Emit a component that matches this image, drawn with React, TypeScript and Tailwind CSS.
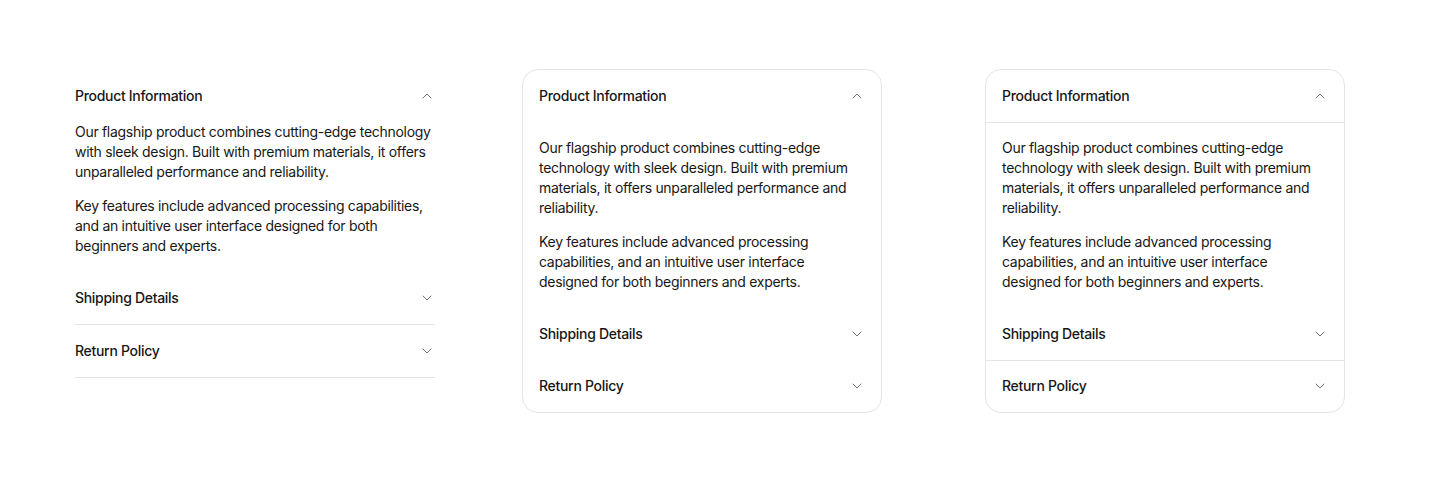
import { ChevronDown, ChevronUp } from "lucide-react";

type Variant = "plain" | "card" | "divided";

const items = ["Shipping Details", "Return Policy"];

function Row({ title, open, border }: { title: string; open?: boolean; border?: boolean }) {
  return (
    <div className={border ? "border-b border-[#e5e5e5]" : ""}>
      <button className="flex w-full items-center justify-between py-4 text-left text-sm font-medium text-[#171717]">
        <span>{title}</span>
        {open ? (
          <ChevronUp size={16} strokeWidth={1.5} className="text-[#737373]" />
        ) : (
          <ChevronDown size={16} strokeWidth={1.5} className="text-[#737373]" />
        )}
      </button>
    </div>
  );
}

function Accordion({ variant }: { variant: Variant }) {
  const card = variant !== "plain";
  return (
    <div
      className={
        card
          ? "-mt-px w-[360px] rounded-2xl border border-[#e5e5e5] bg-white px-4"
          : "w-[360px]"
      }
    >
      <div className={variant === "divided" ? "-mx-4 -mb-px border-b border-[#e5e5e5] px-4" : ""}>
        <Row title="Product Information" open />
      </div>
      <div className={"flex flex-col gap-3.5 pb-4 text-sm text-[#171717] " + (card ? "pt-4" : "")}>
        <p>
          Our flagship product combines cutting-edge technology with sleek design. Built with premium
          materials, it offers unparalleled performance and reliability.
        </p>
        <p>
          Key features include advanced processing capabilities, and an intuitive user interface
          designed for both beginners and experts.
        </p>
      </div>
      {items.map((t, i) => {
        if (variant === "plain") return <Row key={t} title={t} border />;
        if (variant === "divided")
          return (
            <div key={t} className={i === 0 ? "-mx-4 -mb-px border-b border-[#e5e5e5] px-4" : ""}>
              <Row title={t} />
            </div>
          );
        return <Row key={t} title={t} />;
      })}
    </div>
  );
}

export default function App() {
  return (
    <div
      className="flex min-h-[494px] items-start bg-white pl-[75px] pt-[70px] tracking-[-0.3px]"
      style={{ fontFamily: "Inter, 'Noto Sans', sans-serif" }}
    >
      <Accordion variant="plain" />
      <div className="ml-[87px]">
        <Accordion variant="card" />
      </div>
      <div className="ml-[103px]">
        <Accordion variant="divided" />
      </div>
    </div>
  );
}
